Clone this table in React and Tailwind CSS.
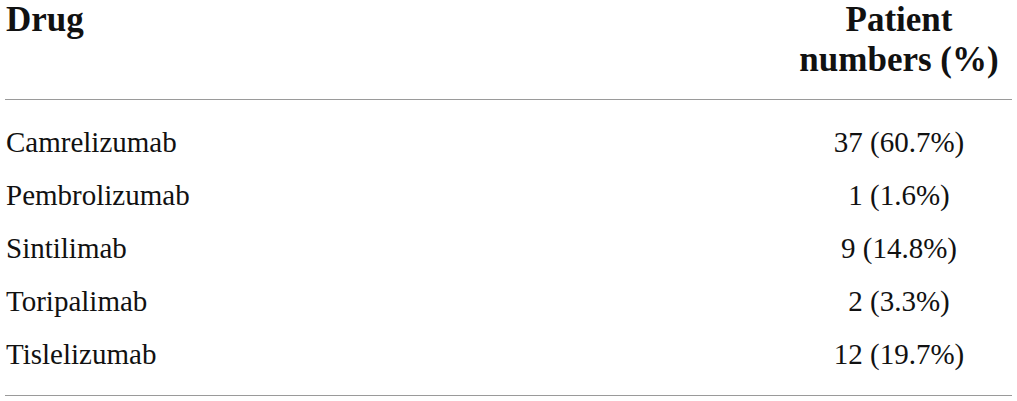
export default function App() {
  const rows = [
    ["Camrelizumab", "37 (60.7%)"],
    ["Pembrolizumab", "1 (1.6%)"],
    ["Sintilimab", "9 (14.8%)"],
    ["Toripalimab", "2 (3.3%)"],
    ["Tislelizumab", "12 (19.7%)"],
  ];
  return (
    <div
      className="w-[1017px] h-[401px] bg-white overflow-hidden text-[#111]"
      style={{ fontFamily: '"Liberation Serif", "Times New Roman", serif' }}
    >
      <div className="ml-[5px] w-[1007px]">
        <div className="flex items-start justify-between border-b border-[#9a9a9a] pb-[19px] text-[35px] font-bold leading-[40px]">
          <div className="pl-px">Drug</div>
          <div className="w-[226px] text-center">
            Patient
            <br />
            numbers (%)
          </div>
        </div>
        <div className="border-b border-[#9a9a9a] pt-[16px] pb-[14px] text-[29px] leading-[53px]">
          {rows.map(([d, n]) => (
            <div key={d} className="flex justify-between">
              <div className="pl-px">{d}</div>
              <div className="w-[226px] text-center">{n}</div>
            </div>
          ))}
        </div>
      </div>
    </div>
  );
}
